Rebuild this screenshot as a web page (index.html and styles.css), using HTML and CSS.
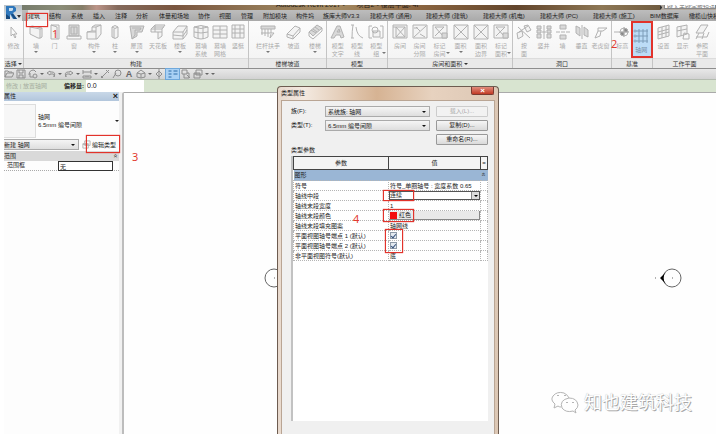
FILE: index.html
```html
<!DOCTYPE html>
<html lang="zh-CN">
<head>
<meta charset="utf-8">
<title>Autodesk Revit 2017</title>
<link rel="stylesheet" href="styles.css">
</head>
<body>
<svg class="sprite" aria-hidden="true">
  <symbol id="i-cursor" viewBox="0 0 16 16"><path d="M5 3v9l2-2 2 4 1-1-2-3h3z"/></symbol>
  <symbol id="i-wall" viewBox="0 0 16 16"><path class="f" d="M2 3l10 2q2 0 2-1v9q-2 2-4 1L2 10z"/><path d="M2 3l2-1 10 2M12 5v9"/></symbol>
  <symbol id="i-door" viewBox="0 0 16 16"><path class="f" d="M4 1h8v14H4z"/><path d="M4 1l6 2v12M8 9v1"/></symbol>
  <symbol id="i-window" viewBox="0 0 16 16"><path class="g" d="M3 1h10v11H3z"/><path d="M5 3h6v7H5zM8 3v7M1 12h14v3H1z"/></symbol>
  <symbol id="i-part" viewBox="0 0 16 16"><path class="f" d="M1 8l5-1V3l3-2h6v9l-4 5H1z"/><path d="M6 7h4V3l5-2M10 3H6M10 7v8M1 8h9"/></symbol>
  <symbol id="i-column" viewBox="0 0 16 16"><path class="f" d="M5 3q3-3 6 0v10q-3 3-6 0z"/><path d="M5 3q3 3 6 0M7 5v9"/></symbol>
  <symbol id="i-roof" viewBox="0 0 16 16"><path class="g" d="M1 2h14l-2 6H8v4l-5 3z"/><path d="M3 4h9l-1 2H6v5l-3 4"/></symbol>
  <symbol id="i-ceiling" viewBox="0 0 16 16"><path class="f" d="M1 5l4-4h10l-3 4v7l-4 3V8H1z"/><path d="M1 5h11M5 1v7M3 3h11M8 8h4"/></symbol>
  <symbol id="i-floor" viewBox="0 0 16 16"><path class="f" d="M1 8l5-6h9v8l-4 5H1z"/><path d="M1 11l10 1 4-6M1 8h10v7M11 8l4-6"/></symbol>
  <symbol id="i-curtain" viewBox="0 0 16 16"><path class="f" d="M1 3q7-3 14 0v10q-7 4-14 0z"/><path d="M1 8q7 2 14 0M5 2v13M10 2v13M1 3q7 3 14 0"/></symbol>
  <symbol id="i-grid3" viewBox="0 0 16 16"><path class="f" d="M1 2h14v12H1z"/><path d="M1 6h14M1 10h14M8 2v12"/></symbol>
  <symbol id="i-mullion" viewBox="0 0 16 16"><path class="f" d="M2 1h12v13H2z"/><path d="M5 1v13M10 1v13M2 5h12M2 9h12"/></symbol>
  <symbol id="i-rail" viewBox="0 0 16 16"><path class="g" d="M1 2h14v3H1z"/><path d="M2 5v6M5 5v7M8 5v8M11 5v4M1 9h13l-4 5 1-4"/></symbol>
  <symbol id="i-ramp" viewBox="0 0 16 16"><path class="f" d="M1 10l8-8 5 2v4l-7 7-6-2z"/><path d="M1 10l6 2 7-8M7 12v3"/></symbol>
  <symbol id="i-stair" viewBox="0 0 16 16"><path class="g" d="M2 8l8-7 5 3-9 8z"/><path d="M2 8v4l4 3 9-8V4M4 6l5 3M6 5l4 3M8 3l4 3"/></symbol>
  <symbol id="i-text" viewBox="0 0 16 16"><path class="g" d="M1 14L7 2h3l4 11-3 1-1-3H6l-2 3z"/><path d="M7 8l2-3 1 3z"/></symbol>
  <symbol id="i-line" viewBox="0 0 16 16"><path d="M2 1h3M4 1q-1 6-1 13M2 14h3M7 3q1 9 7 11"/></symbol>
  <symbol id="i-group" viewBox="0 0 16 16"><path d="M4 2H1v12h3M12 2h3v12h-3"/><path class="f" d="M5 7h7v6H5z"/><circle cx="7" cy="6" r="3"/></symbol>
  <symbol id="i-room" viewBox="0 0 16 16"><path class="f" d="M1 1h14v13H1z"/><path d="M4 3h9v10H4zM4 3l9 10M13 3L4 13M1 3h3"/></symbol>
  <symbol id="i-roomsep" viewBox="0 0 16 16"><path class="f" d="M1 1h14v13H1z"/><path d="M2 13L14 2M4 3l4 4M8 10l5 3M2 4h4"/></symbol>
  <symbol id="i-roomtag" viewBox="0 0 16 16"><path class="f" d="M1 1h14v13H1z"/><path d="M3 3l8 9M12 3L3 12M3 3h9"/><path class="g" d="M10 9h5v5h-5z"/></symbol>
  <symbol id="i-area" viewBox="0 0 16 16"><path class="f" d="M1 1h14v14H1z"/><path d="M1 1l14 14M15 1L1 15"/></symbol>
  <symbol id="i-byface" viewBox="0 0 16 16"><path class="f" d="M1 9l5-2 1 5-5 3zM8 2l4-1 3 5-4 2z"/><path d="M2 3l12 11M3 8l9-6"/></symbol>
  <symbol id="i-shaft" viewBox="0 0 16 16"><path class="g" d="M1 2h4v3H1zM1 6h4v3H1zM1 10h4v4H1zM11 2h4v3h-4zM11 6h4v3h-4zM11 10h4v4h-4z"/><path d="M8 1v14M6 8h4"/></symbol>
  <symbol id="i-wallopen" viewBox="0 0 16 16"><path class="g" d="M5 1h6v4H5zM5 11h6v4H5z"/><path d="M1 8h4M6 8h4M11 8h4"/></symbol>
  <symbol id="i-vert" viewBox="0 0 16 16"><path class="g" d="M2 2l4 2v8l-4-3zM10 3l4 3v7l-4-2z"/><path d="M8 1v14"/></symbol>
  <symbol id="i-dormer" viewBox="0 0 16 16"><path d="M2 14l3-7V4h9M5 7h5l4-3M2 14l5-2 1-5"/></symbol>
  <symbol id="i-level" viewBox="0 0 16 16"><path d="M0 8h15M10 3v10"/><circle cx="10" cy="8" r="4"/><path class="d" d="M10 4v4h4q0-4-4-4zM10 12V8H6q0 4 4 4z"/></symbol>
  <symbol id="i-axis" viewBox="0 0 16 16"><path d="M3 3h12M3 8h12M3 13h12M6 1v14M10 1v14M14 1v14"/><circle class="f" cx="2" cy="3" r="1"/><circle class="f" cx="2" cy="8" r="1"/><circle class="f" cx="2" cy="13" r="1"/></symbol>
  <symbol id="i-set" viewBox="0 0 16 16"><path class="f" d="M2 4l11-3v11L2 15z"/><path d="M2 8l11-3M2 11l11-3M6 3v11M10 2v11"/></symbol>
  <symbol id="i-show" viewBox="0 0 16 16"><path class="f" d="M2 3l10-2v9L2 13z"/><path d="M2 7l10-2M6 2v10M9 9l5 1v5H8z"/></symbol>
  <symbol id="i-plane" viewBox="0 0 16 16"><path class="f" d="M2 9L7 1h7l-5 8z"/><path d="M2 13h11l2-5M5 9l-3 6M10 9l-2 6"/></symbol>

  <symbol id="q-open" viewBox="0 0 10 10"><path d="M1 8V2h3l1 1h3v1M1 8l2-4h7L8 8z"/></symbol>
  <symbol id="q-save" viewBox="0 0 10 10"><path d="M1 1h8v8H1zM3 1v3h4V1M3 9V6h4v3"/></symbol>
  <symbol id="q-sync" viewBox="0 0 10 10"><path d="M1 6q0-5 5-5l2 2M2 4v4h3"/><circle cx="7" cy="7" r="2"/></symbol>
  <symbol id="q-undo" viewBox="0 0 10 10"><path d="M4 2L1 4l3 2V5h3q2 0 1 3 2-5-2-5H4z"/></symbol>
  <symbol id="q-redo" viewBox="0 0 10 10"><path d="M6 2l3 2-3 2V5H3Q1 5 2 8q-2-5 2-5h2z"/></symbol>
  <symbol id="q-measure" viewBox="0 0 10 10"><path d="M1 3h8M1 1v4M9 1v4M1 7h8v2H1zM4 7v1M6 7v1"/></symbol>
  <symbol id="q-dim" viewBox="0 0 10 10"><path d="M1 9l8-8M1 7l2 2M6 1l3 3"/></symbol>
  <symbol id="q-tag" viewBox="0 0 10 10"><path d="M1 9l3-5"/><circle cx="6" cy="4" r="3"/></symbol>
  <symbol id="q-3d" viewBox="0 0 10 10"><path d="M1 4l4-3 4 3v4L5 9 1 8zM1 4l4 1 4-1M5 5v4"/></symbol>
  <symbol id="q-section" viewBox="0 0 10 10"><path d="M5 0v10"/><path d="M2 5l3-3 3 3-3 3z"/></symbol>
  <symbol id="q-thin" viewBox="0 0 10 10"><path class="b" d="M1 2h3M1 5h3M1 8h3M6 2h4M6 5h4"/></symbol>
  <symbol id="q-close" viewBox="0 0 10 10"><path d="M1 1h5v4H1zM3 5v4h5V4H6M6 6l3 3"/></symbol>
  <symbol id="q-switch" viewBox="0 0 10 10"><path d="M3 1h6v5H3zM1 4h6v5H1zM1 5h6"/></symbol>
</svg>

<div class="app">
  <header class="titlebar">
    <p class="doc-title">Autodesk Revit 2017 - &nbsp; &nbsp; &nbsp;项目2 - 楼层平面: 4F</p>
    <label class="search"><span class="tri-right"></span><input type="text" value="键入关键字或短语" aria-label="搜索"></label>
  </header>
  <button class="app-menu" type="button" aria-label="应用程序菜单">
    <svg viewBox="0 0 18 15"><path fill="#2f78bd" d="M2 0h8l2 2v3L9 7l4 6H9L6 8v5H2z"/><path fill="#c7dced" d="M5 2h4v2L8 5H5z"/><path fill="#174a7e" d="M2 8l4 3v2H2zM7 8h2l4 5h-3z"/><path fill="#333" d="M13 9h4l-2 3z"/></svg>
  </button>

  <nav class="tabs">
    <a class="tab current" href="#">建筑</a><a class="tab" href="#">结构</a><a class="tab" href="#">系统</a><a class="tab" href="#">插入</a><a class="tab" href="#">注释</a><a class="tab" href="#">分析</a><a class="tab" href="#">体量和场地</a><a class="tab" href="#">协作</a><a class="tab" href="#">视图</a><a class="tab" href="#">管理</a><a class="tab" href="#">附加模块</a><a class="tab" href="#">构件坞</a><a class="tab" href="#">族库大师V3.3</a><a class="tab" href="#">建模大师 (通用)</a><a class="tab" href="#">建模大师 (建筑)</a><a class="tab" href="#">建模大师 (机电)</a><a class="tab" href="#">建模大师 (PC)</a><a class="tab" href="#">建模大师 (施工)</a><a class="tab" href="#">BIM数据库</a><a class="tab" href="#">橄榄山快模</a>
  </nav>

  <div class="ribbon">
    <section class="panel">
      <div class="tools one">
        <button class="tool" type="button"><svg><use href="#i-cursor"/></svg>修改</button>
      </div>
      <h2 class="caption">选择 <i class="tri"></i></h2>
    </section>
    <section class="panel">
      <div class="tools build">
        <button class="tool" type="button"><svg><use href="#i-wall"/></svg>墙<i class="tri"></i></button>
        <button class="tool" type="button"><svg><use href="#i-door"/></svg>门<span class="mark mark-1">1</span></button>
        <button class="tool" type="button"><svg><use href="#i-window"/></svg>窗</button>
        <button class="tool" type="button"><svg><use href="#i-part"/></svg>构件<i class="tri"></i></button>
        <button class="tool" type="button"><svg><use href="#i-column"/></svg>柱<i class="tri"></i></button>
        <button class="tool" type="button"><svg><use href="#i-roof"/></svg>屋顶<i class="tri"></i></button>
        <button class="tool" type="button"><svg><use href="#i-ceiling"/></svg>天花板</button>
        <button class="tool" type="button"><svg><use href="#i-floor"/></svg>楼板<i class="tri"></i></button>
        <button class="tool" type="button"><svg><use href="#i-curtain"/></svg>幕墙<br>系统</button>
        <button class="tool" type="button"><svg><use href="#i-grid3"/></svg>幕墙<br>网格</button>
        <button class="tool" type="button"><svg><use href="#i-mullion"/></svg>竖梃</button>
      </div>
      <h2 class="caption">构建</h2>
    </section>
    <section class="panel">
      <div class="tools stairs">
        <button class="tool" type="button"><svg><use href="#i-rail"/></svg>栏杆扶手<i class="tri"></i></button>
        <button class="tool" type="button"><svg><use href="#i-ramp"/></svg>坡道</button>
        <button class="tool" type="button"><svg><use href="#i-stair"/></svg>楼梯<i class="tri"></i></button>
      </div>
      <h2 class="caption">楼梯坡道</h2>
    </section>
    <section class="panel">
      <div class="tools model">
        <button class="tool" type="button"><svg><use href="#i-text"/></svg>模型<br>文字</button>
        <button class="tool" type="button"><svg><use href="#i-line"/></svg>模型<br>线</button>
        <button class="tool" type="button"><svg><use href="#i-group"/></svg>模型<br>组<i class="tri side"></i></button>
      </div>
      <h2 class="caption">模型</h2>
    </section>
    <section class="panel">
      <div class="tools rooms">
        <button class="tool" type="button"><svg><use href="#i-room"/></svg>房间</button>
        <button class="tool" type="button"><svg><use href="#i-roomsep"/></svg>房间<br>分隔</button>
        <button class="tool" type="button"><svg><use href="#i-roomtag"/></svg>标记<br>房间<i class="tri side"></i></button>
        <button class="tool" type="button"><svg><use href="#i-area"/></svg>面积<i class="tri"></i></button>
        <button class="tool" type="button"><svg><use href="#i-area"/></svg>面积<br>边界</button>
        <button class="tool" type="button"><svg><use href="#i-roomtag"/></svg>标记<br>面积<i class="tri side"></i></button>
      </div>
      <h2 class="caption">房间和面积 <i class="tri"></i></h2>
    </section>
    <section class="panel">
      <div class="tools openings">
        <button class="tool" type="button"><svg><use href="#i-byface"/></svg>按<br>面</button>
        <button class="tool" type="button"><svg><use href="#i-shaft"/></svg>竖井</button>
        <button class="tool" type="button"><svg><use href="#i-wallopen"/></svg>墙</button>
        <button class="tool" type="button"><svg><use href="#i-vert"/></svg>垂直</button>
        <button class="tool" type="button"><svg><use href="#i-dormer"/></svg>老虎窗</button>
      </div>
      <h2 class="caption">洞口</h2>
    </section>
    <section class="panel">
      <div class="tools datum">
        <button class="tool" type="button"><svg><use href="#i-level"/></svg>标高<span class="mark mark-2">2</span></button>
        <button class="tool active" type="button"><svg><use href="#i-axis"/></svg>轴网</button>
      </div>
      <h2 class="caption">基准</h2>
    </section>
    <section class="panel last">
      <div class="tools plane">
        <button class="tool" type="button"><svg><use href="#i-set"/></svg>设置</button>
        <button class="tool" type="button"><svg><use href="#i-show"/></svg>显示</button>
        <button class="tool" type="button"><svg><use href="#i-plane"/></svg>参照<br>平面</button>
      </div>
      <h2 class="caption wide">工作平面</h2>
    </section>
  </div>

  <div class="quick">
    <svg><use href="#q-open"/></svg><svg><use href="#q-save"/></svg><svg><use href="#q-sync"/></svg><i class="tri"></i><svg><use href="#q-undo"/></svg><i class="tri"></i><svg><use href="#q-redo"/></svg><i class="tri"></i><svg><use href="#q-measure"/></svg><i class="tri"></i><svg><use href="#q-dim"/></svg><svg><use href="#q-tag"/></svg><b class="letter">A</b><svg><use href="#q-3d"/></svg><i class="tri"></i><svg><use href="#q-section"/></svg><svg class="on"><use href="#q-thin"/></svg><svg><use href="#q-close"/></svg><svg><use href="#q-switch"/></svg><i class="tri"></i><i class="tri"></i>
  </div>

  <div class="options">
    <span class="mode">修改 | 放置轴网</span>
    <label for="offset">偏移量:</label>
    <input id="offset" type="text" value="0.0">
  </div>

  <main class="work">
    <aside class="props">
      <div class="props-head"><h2>属性</h2><button type="button" aria-label="关闭">×</button></div>
      <div class="type-row"><span class="thumb"></span><p>轴网<br>6.5mm 编号间隙</p><i class="tri"></i></div>
      <div class="instance-row">
        <label class="pick"><select aria-label="实例"><option>新建 轴网</option></select></label>
        <button class="edit-type" type="button"><svg><use href="#q-switch"/></svg>编辑类型</button>
      </div>
      <div class="group-row"><span>范围</span><span class="chev">«</span></div>
      <div class="field-row"><label for="scope">范围框</label><input id="scope" type="text" value="无"></div>
    </aside>
    <div class="canvas">
      <span class="mark mark-3">3</span>
      <svg class="bubble bubble-left" viewBox="0 0 30 20"><circle cx="11" cy="10" r="9"/><path d="M11 10h1"/></svg>
      <svg class="bubble bubble-right" viewBox="0 0 30 20"><circle cx="19" cy="10" r="9"/><path d="M19 10h1M2 10h1"/><path class="solid" d="M7 10l6-6q-5 6 0 12z"/></svg>
      <div class="watermark">
        <svg viewBox="0 0 30 24"><path d="M11 16q-2 0-3-1l-4 2 1-4Q0 9 3 5q4-5 11-3 4 2 5 5"/><path d="M19 7q8 0 9 7 0 3-3 5l1 3-3-2q-7 2-11-3-3-8 7-10z"/><path d="M7 5l1-1 1 1M14 5l1-1 1 1M16 12l1-1 1 1M22 12l1-1 1 1"/></svg>
        <span>知也建筑科技</span>
      </div>
    </div>
  </main>

  <section class="dialog" role="dialog" aria-label="类型属性">
    <div class="dialog-head"><h2>类型属性</h2><button type="button" aria-label="关闭">×</button></div>
    <div class="dialog-body">
      <div class="form">
        <label for="family">族(F):</label>
        <span class="pick"><select id="family"><option>系统族: 轴网</option></select></span>
        <button type="button" disabled>载入(L)...</button>
        <label for="type">类型(T):</label>
        <span class="pick"><select id="type"><option>6.5mm 编号间隙</option></select></span>
        <button type="button">复制(D)...</button>
        <button class="rename" type="button">重命名(R)...</button>
      </div>
      <h3>类型参数</h3>
      <div class="sheet">
        <table>
          <colgroup><col class="c-name"><col class="c-value"><col class="c-eq"></colgroup>
          <thead><tr><th>参数</th><th>值</th><th>=</th></tr></thead>
          <tbody>
            <tr class="group"><td colspan="2">图形</td><td><span class="chev">«</span></td></tr>
            <tr><td>符号</td><td>符号_单圈轴号 : 宽度系数 0.65</td><td></td></tr>
            <tr><td>轴线中段</td><td class="ctl"><span class="flat"><select aria-label="轴线中段"><option>连续</option></select><span class="drop"><i class="tri"></i></span></span><span class="ring ring-line"></span></td><td></td></tr>
            <tr><td>轴线末段宽度</td><td>1</td><td></td></tr>
            <tr><td>轴线末段颜色</td><td class="ctl"><button class="color" type="button"><i></i>红色</button><span class="ring ring-color"></span></td><td></td></tr>
            <tr><td>轴线末段填充图案</td><td>轴网线</td><td></td></tr>
            <tr><td><label for="end1">平面视图轴号端点 1 (默认)</label></td><td class="ctl"><input id="end1" type="checkbox" checked><span class="ring ring-checks"></span></td><td></td></tr>
            <tr><td><label for="end2">平面视图轴号端点 2 (默认)</label></td><td class="ctl"><input id="end2" type="checkbox" checked></td><td></td></tr>
            <tr><td>非平面视图符号(默认)</td><td>底</td><td></td></tr>
          </tbody>
        </table>
        <span class="mark mark-4">4</span>
      </div>
    </div>
  </section>
</div>
</body>
</html>
```
FILE: styles.css
```css
* { box-sizing: border-box; }

body {
  margin: 0;
  background: #fff;
  color: #222;
  font: 6px/8px "Liberation Sans", "Noto Sans CJK SC", sans-serif;
}

h2, h3, p { margin: 0; font-size: 6px; font-weight: normal; }
button, input, select { font: inherit; color: inherit; margin: 0; padding: 0; border: 0; border-radius: 0; background: none; }
button { text-align: center; }
select { appearance: none; width: 100%; height: 100%; padding-left: 2px; }
a { color: inherit; text-decoration: none; }

svg { display: block; fill: none; stroke: #b2b2b2; stroke-width: 1; }
.sprite { position: absolute; width: 0; height: 0; }
.f { fill: #f3f3f3; }
.g { fill: #d9d9d9; }
.d { fill: #888; }
.b { stroke: #2d6da8; }

.tri, .tri-right { display: inline-block; flex: none; border: 2px solid transparent; border-top-color: currentColor; border-bottom: 0; }
.tri-right { border: 2px solid transparent; border-left-color: #333; border-right: 0; }

.app {
  position: relative;
  display: flex;
  flex-direction: column;
  height: calc(100vh - 11px);
  margin: 5px 0 6px 4px;
  overflow: hidden;
}

/* Window title and tabs */
.titlebar {
  display: flex;
  justify-content: space-between;
  height: 5px;
  padding-left: 272px;
  overflow: hidden;
  background: linear-gradient(90deg, #6d7466, #8b8d78 8%, #847d68 11%, #bb9488 13%, #846a5c 16%, #79553f 24%, #927856 36%, #a48b63 46%, #8b6541 58%, #62452c 72%, #8d7755 84%, #54412b);
}
.doc-title { margin-top: -4px; font-size: 7px; line-height: 8px; color: #1e1a16; }
.search { display: flex; width: 56px; background: #b3aaa0; }
.search input { flex: 1; min-width: 0; height: 4px; margin-left: 2px; padding-left: 2px; border: 1px solid #888; border-top: 0; background: #fff; color: #777; }
.app-menu { position: absolute; left: 0; top: 0; width: 18px; height: 16px; background: linear-gradient(#b9c2c9, #e9ecee); z-index: 1; }
.app-menu svg { width: 18px; height: 15px; stroke: none; }

.tabs {
  display: grid;
  grid-template-columns: 21fr 22fr 22fr 22fr 21fr 23fr 39fr 21fr 22fr 22fr 33fr 27fr 47fr 56fr 57fr 57fr 53fr 57fr 39fr 27fr;
  height: 11px;
  padding-left: 24px;
  overflow: hidden;
  background: linear-gradient(#bdbdbd, #a9a9a9);
}
.tab { min-width: 0; line-height: 13px; white-space: nowrap; }
.current { background: #e4e4e4; }
.app::before { content: ""; position: absolute; z-index: 3; left: 22px; top: 8px; width: 20px; height: 12px; border: 1px solid #e2332b; box-shadow: 0 0 1px #e2332b; }

/* Ribbon */
.ribbon {
  display: grid;
  grid-template-columns: 20fr 225fr 78fr 61fr 125fr 99fr 41fr 63fr;
  border-bottom: 1px solid #8d8d8d;
}
.panel { display: flex; flex-direction: column; min-width: 0; border-right: 1px solid #c4c4c4; }
.last { border-right: 0; }
.tools { display: grid; height: 37px; padding: 0 1px; background: linear-gradient(#fcfcfc, #f4f4f4); }
.one { grid-template-columns: 1fr; }
.build { grid-template-columns: 18fr 19fr 20fr 20fr 22fr 21fr 22fr 22fr 20fr 18fr 18fr; padding-left: 3px; }
.stairs { grid-template-columns: 28fr 23fr 20fr; padding-left: 5px; }
.model { grid-template-columns: 20fr 19fr 20fr; }
.rooms { grid-template-columns: 20fr 19fr 21fr 21fr 20fr 20fr; padding-left: 2px; }
.openings { grid-template-columns: 20fr 19fr 19fr 19fr 19fr; }
.datum { grid-template-columns: 19fr 20fr; }
.plane { grid-template-columns: 19fr 19fr 20fr; padding-right: 4px; }
.tool {
  position: relative;
  display: block;
  min-width: 0;
  padding-top: 3px;
  color: #aaa;
  white-space: nowrap;
  align-self: start;
}
.tool svg { width: 16px; height: 16px; margin: 0 auto 2px; }
.tool .tri { display: block; width: 4px; margin: 1px auto 0; color: #777; }
.tool .side { position: absolute; right: 0; bottom: 4px; }
.active { height: 36px; background: #bcdcf6; color: #7790a8; }
.active svg { stroke: #7d9cb8; }
.active::after { content: ""; position: absolute; inset: 0 -2px -1px -1px; border: 2px solid #e2332b; }
.caption { height: 10px; line-height: 10px; text-align: center; white-space: nowrap; border-top: 1px solid #dcdcdc; background: #e9e9e9; color: #333; }
.caption .tri { vertical-align: middle; }

.mark { position: absolute; z-index: 2; color: #e23b30; font: 11px/12px "Noto Sans", "Liberation Sans", sans-serif; }
.mark-1 { left: 7px; top: 7px; }
.mark-2 { left: -2px; top: 17px; }
.mark-3 { left: 8px; top: 58px; }
.mark-4 { left: 60px; top: 57px; }

/* Quick access bar */
.quick {
  display: flex;
  align-items: center;
  gap: 2px;
  height: 11px;
  border-bottom: 1px solid #b4bcb0;
  background: linear-gradient(#e8e8e8, #d2d2d2);
  color: #666;
}
.quick svg { width: 10px; height: 10px; stroke: #8f8f8f; }
.quick .on { width: 13px; background: #a9d1f5; outline: 1px solid #6fa8db; }
.letter { width: 10px; font-size: 9px; text-align: center; }

/* Option bar */
.options { display: flex; height: 12px; line-height: 12px; background: #d8e4d0; }
.mode { width: 60px; padding-left: 2px; color: #a5ada0; }
.options label { width: 22px; font-weight: bold; }
.options input { width: 58px; padding-left: 1px; background: #fff; font-size: 7px; }

/* Properties palette */
.work { display: flex; flex: 1; min-height: 0; }
.props { width: 118px; border-right: 3px solid #f1f1f1; background: #fdfdfd; }
.props-head { display: flex; justify-content: space-between; height: 9px; padding-right: 1px; background: linear-gradient(#c9d8e8, #b2c6dc); }
.props-head h2 { line-height: 9px; }
.props-head button { font-size: 9px; font-weight: bold; line-height: 9px; }
.type-row { display: flex; align-items: center; height: 37px; margin-top: 1px; }
.thumb { width: 32px; height: 34px; border: 1px solid #ddd; border-left: 0; background: #f7f7f7; }
.type-row p { flex: 1; padding-left: 2px; }
.instance-row { display: flex; gap: 3px; height: 12px; padding: 0 1px 1px 0; }
.pick { position: relative; display: block; height: 11px; border: 1px solid #aaa; background: linear-gradient(#f5f5f5, #dedede); }
.pick::after { content: ""; position: absolute; right: 3px; top: 4px; border: 2px solid transparent; border-top-color: #111; border-bottom: 0; pointer-events: none; }
.instance-row .pick { width: 75px; border-left: 0; }
.instance-row select { padding-left: 0; }
.edit-type { position: relative; display: flex; align-items: center; flex: 1; gap: 1px; white-space: nowrap; }
.edit-type svg { width: 9px; height: 9px; }
.edit-type::after { content: ""; position: absolute; inset: -4px -2px -3px 4px; border: 1px solid #e2332b; box-shadow: 0 0 1px #e2332b; }
.group-row { display: flex; justify-content: space-between; height: 10px; padding-right: 3px; line-height: 10px; background: #d9d9d9; }
.chev { display: inline-block; transform: rotate(90deg); font-size: 7px; line-height: 7px; }
.field-row { display: flex; height: 10px; padding-right: 6px; border-bottom: 1px dotted #aaa; }
.field-row label { width: 54px; padding-left: 3px; line-height: 9px; }
.field-row input { flex: 1; min-width: 0; height: 10px; padding-left: 1px; border: 1px solid #333; background: #fff; }

/* Drawing canvas */
.canvas { position: relative; flex: 1; border-left: 2px solid #bdbdbd; border-top: 1px solid #aaa; border-top-left-radius: 2px; background: #fefefe; }
.bubble { position: absolute; top: 175px; width: 30px; height: 20px; stroke: #666; }
.bubble-left { left: 139px; }
.bubble-right { right: 33px; }
.solid { fill: #000; stroke: none; }
.watermark { position: absolute; right: 24px; bottom: 19px; display: flex; align-items: center; gap: 4px; color: #fff; font-size: 18px; line-height: 24px; text-shadow: 1px 1px 0 #a8a8a8, 0 0 1px #aaa; }
.watermark svg { width: 30px; height: 24px; stroke: #b5b5b5; }

/* Type properties dialog */
.dialog {
  position: absolute;
  left: 273px;
  top: 81px;
  bottom: 0;
  width: 222px;
  display: flex;
  flex-direction: column;
  padding: 0 3px;
  border: 1px solid #6d5c50;
  border-bottom: 0;
  border-radius: 4px 4px 0 0;
  background: linear-gradient(90deg, #e8d9cd, #f3e9e0 12%, #d6b393 45%, #e7d2bf 70%, #dcc7b4);
}
.dialog-head { display: flex; justify-content: space-between; height: 13px; padding-right: 1px; }
.dialog-head h2 { line-height: 13px; }
.dialog-head button { width: 23px; height: 8px; line-height: 7px; font-size: 8px; font-weight: bold; color: #fff; border: 1px solid #7b3a30; border-top: 0; border-radius: 0 0 2px 2px; background: linear-gradient(#e08d7c, #c23a26); }
.dialog-body { flex: 1; display: flex; flex-direction: column; padding: 5px 6px 13px 9px; border: 1px solid #b9a594; border-bottom: 0; background: #f0f0f0; }
.form { display: grid; grid-template-columns: 34px 1fr 52px; grid-auto-rows: 11px; row-gap: 3px; line-height: 11px; }
.form .pick { margin-right: 6px; }
.form button { border: 1px solid #999; border-radius: 1px; background: linear-gradient(#f6f6f6, #dadada); line-height: 9px; }
.form button:disabled { border-color: #ccc; background: #f2f2f2; color: #aaa; }
.form .rename { grid-column: 3; }
.dialog h3 { margin: 1px 0 2px; line-height: 8px; }
.sheet { position: relative; flex: 1; border-left: 2px solid #c2c2c2; background: #fff; }
table { width: 100%; table-layout: fixed; border-collapse: collapse; line-height: 8px; }
.c-name { width: 95px; }
.c-eq { width: 7px; }
th { height: 13px; padding: 0; border: 1px solid #444; background: #f4f4f4; font-weight: normal; }
td { height: 10px; padding: 0 0 0 1px; border: 1px dotted #b5b5b5; white-space: nowrap; }
.group td { height: 11px; border: 0; background: #9ab6d5; }
.ctl { position: relative; padding: 0; }
.flat { display: flex; height: 9px; border: 1px solid #555; background: #fff; }
.flat select { flex: 1; min-width: 0; padding-left: 0; line-height: 7px; }
.drop { display: flex; align-items: center; justify-content: center; width: 8px; border-left: 1px solid #888; background: #dcdcdc; color: #000; pointer-events: none; }
.color { display: flex; align-items: center; gap: 2px; width: 100%; height: 9px; padding-left: 1px; border-right: 1px solid #888; border-bottom: 1px solid #888; background: #e9e9e9; }
.color i { width: 7px; height: 7px; background: #f40d0d; }
.ctl input { appearance: none; display: block; position: relative; width: 7px; height: 7px; margin: 1px 0 1px 1px; border: 1px solid #8d9aa8; background: #e4eaf0; }
.ctl input:checked::after { content: ""; position: absolute; left: 1px; top: 0; width: 2px; height: 4px; border: solid #34507a; border-width: 0 1px 1px 0; transform: rotate(40deg); }
.ring { position: absolute; z-index: 2; left: -6px; top: -1px; width: 31px; height: 11px; border: 1px solid #e2332b; box-shadow: 0 0 1px #e2332b; pointer-events: none; }
.ring-color { top: -2px; height: 13px; }
.ring-checks { left: -4px; top: -2px; width: 18px; height: 24px; }
```
